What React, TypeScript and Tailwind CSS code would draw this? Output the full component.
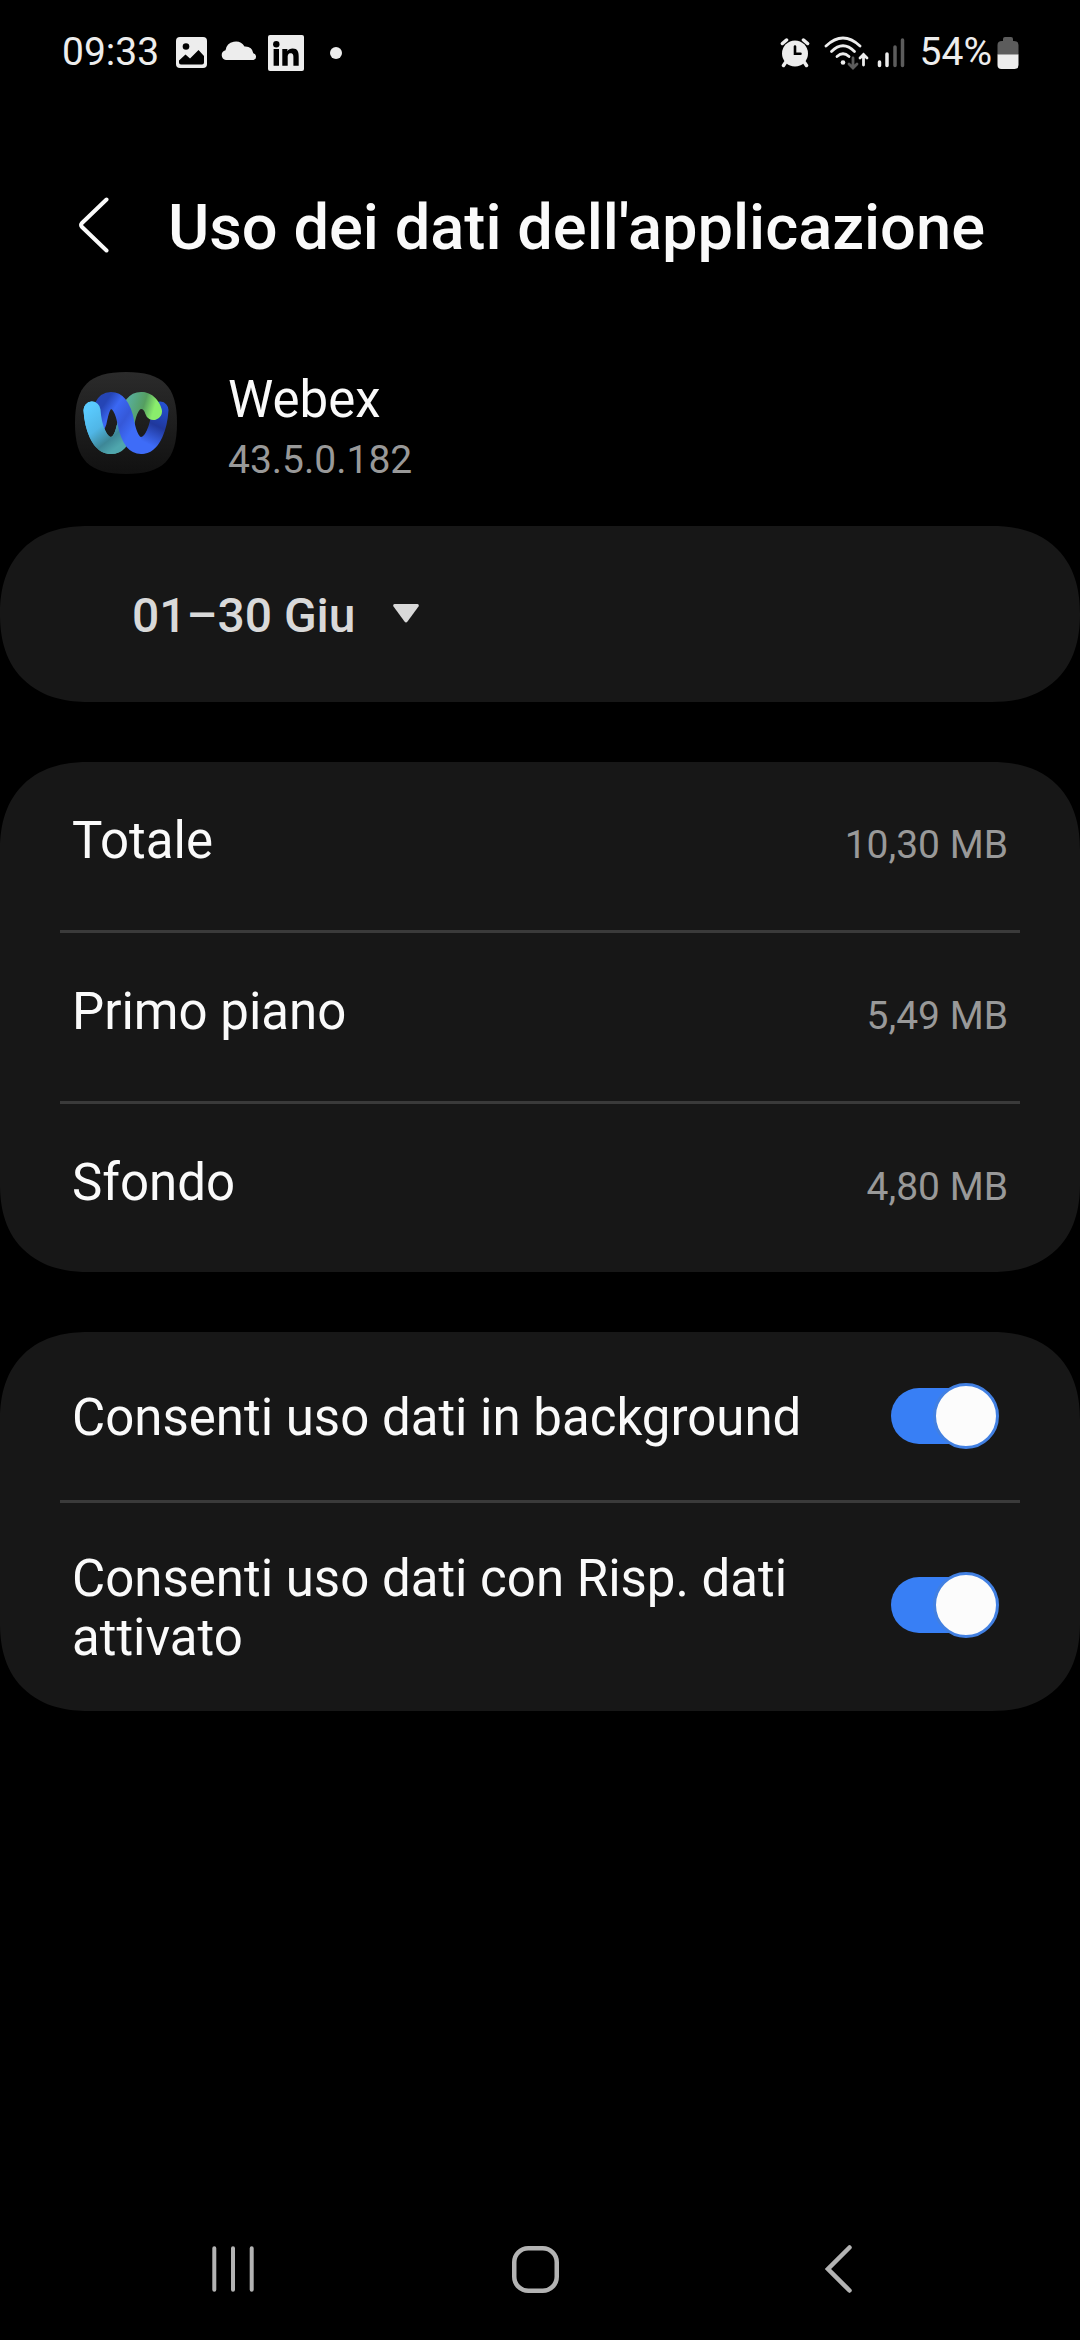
import type { ReactNode } from 'react'

const USAGE = [
  { label: 'Totale', value: '10,30 MB' },
  { label: 'Primo piano', value: '5,49 MB' },
  { label: 'Sfondo', value: '4,80 MB' },
]

function StatusBar() {
  return (
    <div className="flex h-[105px] items-center justify-between pl-[62px] pr-[61px] text-[39px] leading-none text-[#ededed]">
      <div className="flex items-center">
        <span className="w-[114px]">09:33</span>
        <svg width="31" height="31" viewBox="0 0 31 31" className="shrink-0">
          <rect width="31" height="31" rx="4" fill="#ededed" />
          <circle cx="10" cy="9.500" r="3.300" fill="#000" />
          <path d="M3 23.500L9.500 17.500L14 21.500L22.500 13L28 19V25.500Q28 27.500 26 27.500H5Q3 27.500 3 25.500Z" fill="#000" />
        </svg>
        <svg width="36" height="20" viewBox="0 0 36 20" className="ml-3.5 -mt-1.5 shrink-0">
          <path d="M5 20A5 5 0 0 1 4.500 10.200A10.300 10.300 0 0 1 23.500 6.500Q31 6 32.300 13.200A3.500 3.500 0 0 1 32.500 20Z" fill="#ededed" />
        </svg>
        <svg width="36" height="36" viewBox="0 0 36 36" className="ml-[11px] shrink-0">
          <rect width="36" height="36" rx="2" fill="#ededed" />
          <g fill="#000">
            <circle cx="8.300" cy="9.200" r="3.200" />
            <path d="M5.600 14H11V30.700H5.600ZM14.300 14H19.400V16.300C20.400 14.600 22.300 13.600 24.600 13.600C29.700 13.600 30.700 17 30.700 21.400V30.700H25.400V22.500C25.400 20.500 25.300 18.200 22.700 18.200C20.100 18.200 19.700 20.200 19.700 22.400V30.700H14.300Z" />
          </g>
        </svg>
        <span className="ml-[26px] size-3 rounded-full bg-[#ededed]" />
      </div>

      <div className="flex items-center">
        <svg width="30" height="30" viewBox="0 0 30 30">
          <circle cx="15" cy="15.500" r="13" fill="#ededed" />
          <path d="M2.400 5.500L6.500 2M23.500 2L27.600 5.500M5.500 24.500L3.500 27.500M24.500 24.500L26.500 27.500" stroke="#ededed" strokeWidth="3.500" strokeLinecap="round" />
          <path d="M15 8.500V15.800H20.500" stroke="#000" strokeWidth="2.600" fill="none" strokeLinecap="round" />
        </svg>
        <svg width="45" height="34" viewBox="0 0 45 34" className="ml-3.5">
          <g fill="none" stroke="#ededed" strokeWidth="2.800" strokeLinecap="round">
            <path d="M2 10Q19-6 36 10" />
            <path d="M7.500 15.500Q19 4 30.500 15.500" />
            <path d="M13 20.500Q19 15 25 20.500" />
            <path d="M39.500 29V18.500M36 22L39.500 18.500L43 22" />
          </g>
          <circle cx="19" cy="26.500" r="2.300" fill="#ededed" />
          <path d="M29 22V32M25 28L29 32L33 28" fill="none" stroke="#5c5c5c" strokeWidth="2.800" strokeLinecap="round" />
        </svg>
        <svg width="28" height="30" viewBox="0 0 28 30" className="ml-2">
          <g strokeWidth="3.500" strokeLinecap="round">
            <path d="M2.500 24V27.500M10 16V27.500" stroke="#ededed" />
            <path d="M18 9V27.500M25.500 2V27.500" stroke="#5c5c5c" />
          </g>
        </svg>
        <span className="ml-[15px]">54%</span>
        <svg width="22" height="32" viewBox="0 0 22 32" className="ml-[5px]">
          <path d="M8 0H14Q16 0 16 2V4H17Q21.500 4 21.500 8V18H.5V8Q.5 4 5 4H6V2Q6 0 8 0Z" fill="#5c5c5c" />
          <path d="M.5 17.500H21.500V28Q21.500 32 17.500 32H4.500Q.5 32 .5 28Z" fill="#ededed" />
        </svg>
      </div>
    </div>
  )
}

function WebexLogo() {
  return (
    <svg width="102" height="102" viewBox="0 0 102 102" className="shrink-0">
      <defs>
        <linearGradient id="tile" x1="0" y1="0" x2="0" y2="1">
          <stop stopColor="#2b2b2b" />
          <stop offset="1" stopColor="#111" />
        </linearGradient>
        <linearGradient id="cyan" gradientUnits="userSpaceOnUse" x1="16" y1="34" x2="46" y2="72">
          <stop stopColor="#5acbff" />
          <stop offset="0.45" stopColor="#50b6e6" />
          <stop offset="0.78" stopColor="#3d8797" />
          <stop offset="1" stopColor="#4fa6ad" />
        </linearGradient>
        <linearGradient id="green" gradientUnits="userSpaceOnUse" x1="52" y1="35" x2="82" y2="44">
          <stop stopColor="#58ad98" />
          <stop offset="0.5" stopColor="#559e60" />
          <stop offset="0.85" stopColor="#8aed6c" />
        </linearGradient>
        <linearGradient id="navy" gradientUnits="userSpaceOnUse" x1="88" y1="32" x2="68" y2="72">
          <stop stopColor="#2550d0" />
          <stop offset="0.5" stopColor="#20389c" />
          <stop offset="0.95" stopColor="#3e6cf8" />
        </linearGradient>
        <linearGradient id="blue" gradientUnits="userSpaceOnUse" x1="24" y1="40" x2="66" y2="68">
          <stop stopColor="#2545b5" />
          <stop offset="0.22" stopColor="#3b68f4" />
          <stop offset="0.5" stopColor="#3558d8" />
          <stop offset="0.75" stopColor="#3e6cf8" />
        </linearGradient>
        <clipPath id="leftSide">
          <rect width="36" height="102" />
        </clipPath>
        <clipPath id="rightSide">
          <rect x="66" width="36" height="102" />
        </clipPath>
      </defs>
      <path d="M51 0C88 0 102 14 102 51S88 102 51 102S0 88 0 51S14 0 51 0Z" fill="url(#tile)" />
      <g fill="none" strokeWidth="17" strokeLinecap="round">
        <path d="M36 73.500C45 73.500 49 62 51 51C53.500 38 58 28.500 66 28.500" stroke="url(#green)" />
        <path d="M17 38C18 54 24 73.500 36 73.500C44 73.500 48 65 50 55" stroke="url(#cyan)" />
        <path d="M23 51C25.500 38 28 28.500 36 28.500C44 28.500 48.500 38 51 51C53.500 64 58 73.500 66 73.500" stroke="url(#blue)" />
        <path d="M17 38C18 54 24 73.500 36 73.500" stroke="url(#cyan)" clipPath="url(#leftSide)" />
        <g clipPath="url(#rightSide)">
          <path d="M85 38C84 54 78 73.500 66 73.500" stroke="url(#navy)" />
          <path d="M66 28.500C73 28.500 77 34 78.500 39.500" stroke="url(#green)" />
        </g>
      </g>
    </svg>
  )
}

function Card({ children, className = '' }: { children: ReactNode; className?: string }) {
  return (
    <section className={`rounded-[88px] bg-[#171717] [corner-shape:superellipse(1.2)] ${className}`}>
      {children}
    </section>
  )
}

function Divider() {
  return <div className="mx-[60px] h-[3px] bg-[#3a3a3a]" />
}

function Toggle() {
  return (
    <button role="switch" aria-checked="true" className="flex h-[66px] w-[108px] shrink-0 items-center">
      <span className="flex h-14 w-[100px] items-center rounded-full bg-[#387ff5]">
        <span className="ml-[42px] size-[66px] shrink-0 rounded-full border-[3px] border-[#4280e2] bg-[#fcfcfc]" />
      </span>
    </button>
  )
}

export default function App() {
  return (
    <div className="flex h-[2340px] w-[1080px] flex-col bg-black font-['Roboto',sans-serif] text-[#fafafa]">
      <StatusBar />

      <header className="flex h-[245px] items-center pl-[78px]">
        <svg width="32" height="56" viewBox="0 0 32 56" className="-mt-1.5 shrink-0">
          <path d="M28.500 2.500L4 26Q2 28 4 30L28.500 53.500" fill="none" stroke="#fafafa" strokeWidth="4" strokeLinecap="round" />
        </svg>
        <h1 className="ml-[58px] whitespace-nowrap text-[63.2px] font-medium leading-none">Uso dei dati dell'applicazione</h1>
      </header>

      <div className="flex h-[176px] pl-[75px] pt-[22px]">
        <WebexLogo />
        <div className="-mt-0.5 ml-[51px]">
          <div className="text-[51px] leading-[60px]">Webex</div>
          <div className="text-[39px] leading-[60px] text-[#999]">43.5.0.182</div>
        </div>
      </div>

      <Card className="flex h-44 items-center pl-[132px] text-[#d9d9d9]">
        <span className="pt-[3px] text-[48px] font-medium leading-none">01–30 Giu</span>
        <svg width="26" height="19" viewBox="0 0 26 19" className="-mt-0.5 ml-[37px]">
          <path d="M1.500 0H24.500Q26.500 .5 25.500 2.500L14.500 17.500Q13 19.500 11.500 17.500L.5 2.500Q-.5 .5 1.500 0Z" fill="#d9d9d9" />
        </svg>
      </Card>

      <Card className="mt-[60px]">
        {USAGE.map((row, i) => (
          <div key={row.label}>
            {i > 0 && <Divider />}
            <div className="flex h-[168px] items-baseline justify-between px-[72px] pt-[49px]">
              <span className="text-[51px] leading-[60px]">{row.label}</span>
              <span className="text-[39px] text-[#999]">{row.value}</span>
            </div>
          </div>
        ))}
      </Card>

      <Card className="mt-[60px]">
        <div className="flex h-[168px] items-center justify-between pl-[72px] pr-[81px]">
          <span className="pt-[3px] text-[51px] leading-[59px]">Consenti uso dati in background</span>
          <Toggle />
        </div>
        <Divider />
        <div className="flex h-[208px] items-center justify-between pb-1 pl-[72px] pr-[81px]">
          <span className="w-[740px] pt-1.5 text-[51px] leading-[59px]">Consenti uso dati con Risp. dati attivato</span>
          <Toggle />
        </div>
      </Card>

      <nav className="mt-auto flex h-[142px] items-center pl-[212px]">
        <svg width="42" height="46" viewBox="0 0 42 46">
          <path d="M2.300 2.200V43.800M21 2.200V43.800M39.700 2.200V43.800" stroke="#b3b3b3" strokeWidth="4" strokeLinecap="round" />
        </svg>
        <svg width="47" height="47" viewBox="0 0 47 47" className="ml-[258px]">
          <rect x="2.250" y="2.250" width="42.500" height="42.500" rx="14" fill="none" stroke="#b3b3b3" strokeWidth="4.500" />
        </svg>
        <svg width="27" height="48" viewBox="0 0 27 48" className="ml-[266px]">
          <path d="M24.500 2.500L3 24L24.500 45.500" fill="none" stroke="#b3b3b3" strokeWidth="4.500" strokeLinecap="round" />
        </svg>
      </nav>
    </div>
  )
}
